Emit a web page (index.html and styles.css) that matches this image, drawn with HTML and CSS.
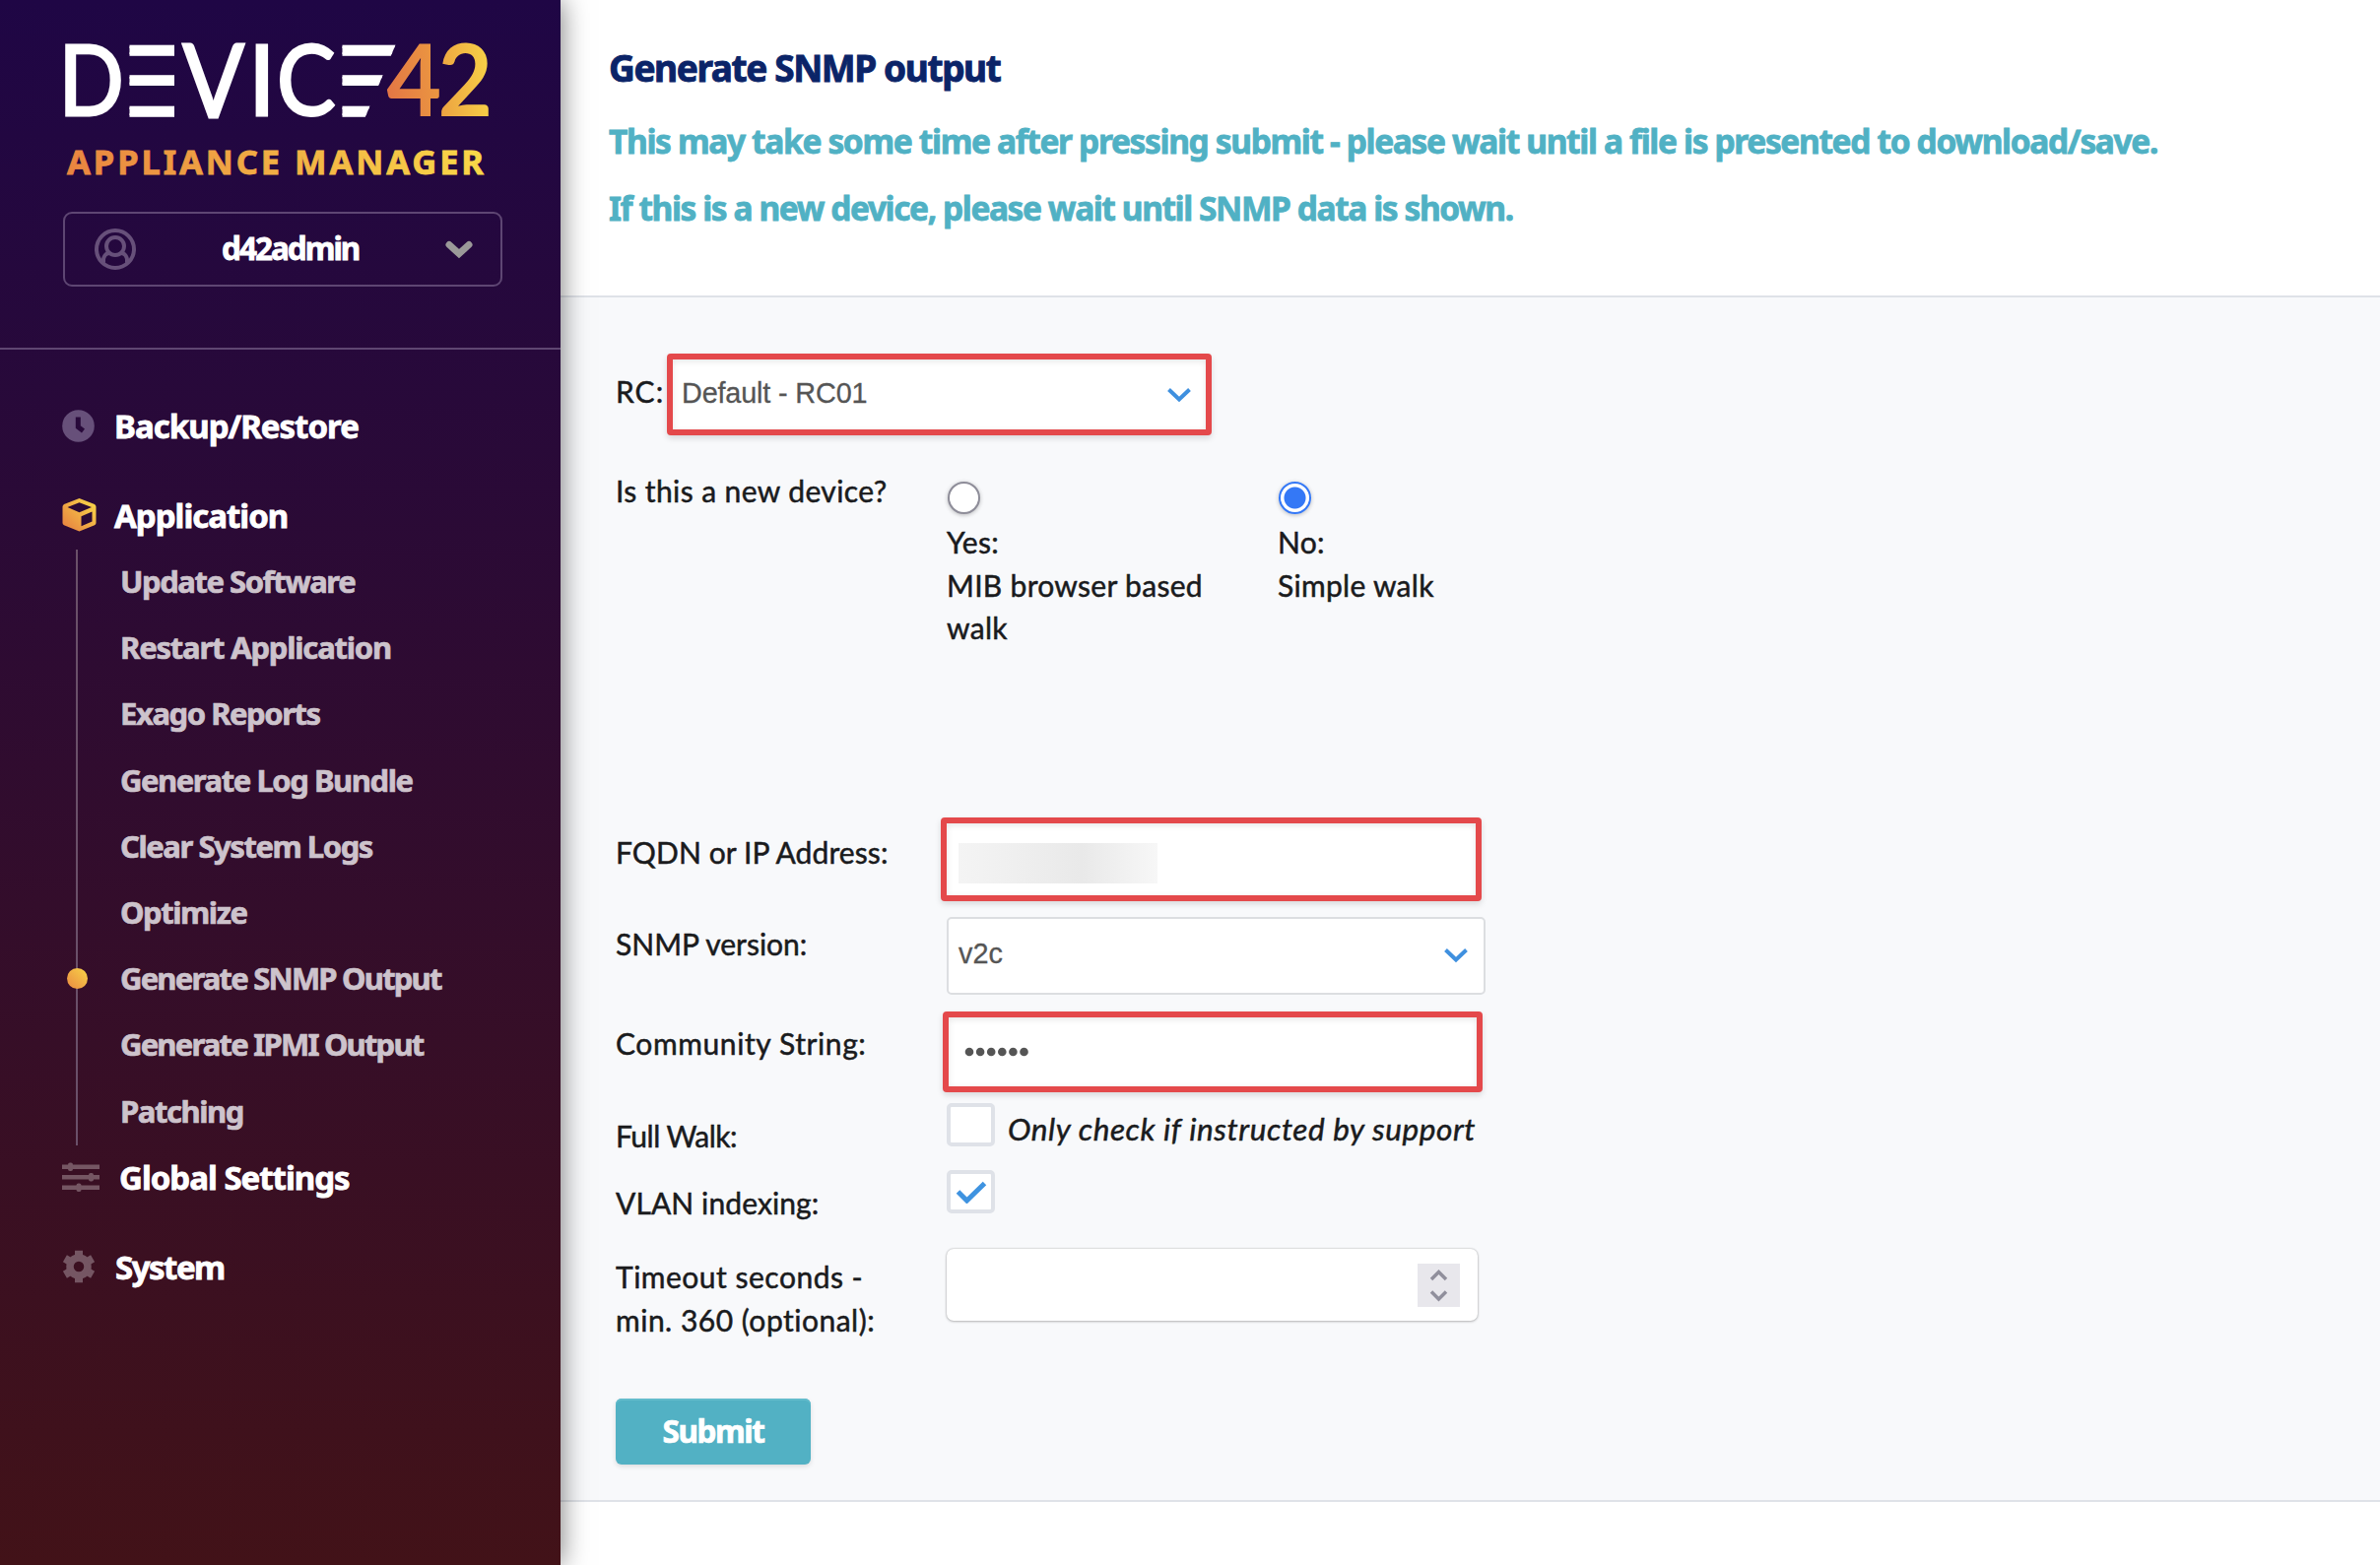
FILE: index.html
```html
<!DOCTYPE html>
<html lang="en">
<head>
<meta charset="utf-8">
<title>Generate SNMP output</title>
<link rel="stylesheet" href="styles.css">
</head>
<body>
<div class="app">
  <aside class="sidebar">
    <svg class="brand" width="569" height="195" viewBox="0 0 569 195">
      <defs>
        <linearGradient id="four" x1="0" y1=".7" x2="1" y2=".4"><stop offset="0" stop-color="#e27545"/><stop offset="1" stop-color="#ec9a40"/></linearGradient>
        <linearGradient id="two" x1="0" y1=".7" x2="1" y2=".5"><stop offset="0" stop-color="#eca041"/><stop offset="1" stop-color="#f8d347"/></linearGradient>
        <linearGradient id="warm2" gradientUnits="userSpaceOnUse" x1="68" y1="0" x2="491" y2="0"><stop offset="0" stop-color="#e98540"/><stop offset="1" stop-color="#f9d848"/></linearGradient>
        <clipPath id="e1"><rect x="131.5" y="40" width="45.5" height="85"/></clipPath>
        <clipPath id="e2"><path d="M347.5 40H403.8L368 125.4H347.5Z"/></clipPath>
      </defs>
      <g class="wordmark">
        <text transform="translate(59.5 117.3) scale(.88 1)">D</text>
        <g clip-path="url(#e1)"><text class="bars" transform="translate(91 116.5) scale(1.84 .985)">E</text></g>
        <text transform="translate(185.500 119) scale(.93 1.03)">V</text>
        <text transform="translate(252 117.3)">I</text>
        <text transform="translate(281 117.3) scale(.9 1)">C</text>
        <g clip-path="url(#e2)"><text class="bars" transform="translate(307 116.5) scale(1.84 .985)">E</text></g>
        <g class="number"><text fill="url(#four)" transform="translate(392.500 118) scale(.97 1.03)">4</text><text fill="url(#two)" transform="translate(444.500 117.7) scale(.97 1.02)">2</text></g>
      </g>
      <text class="tagline" x="68" y="177" textLength="423" fill="url(#warm2)" stroke="url(#warm2)">APPLIANCE MANAGER</text>
    </svg>
    <div class="user">
      <svg width="42" height="42" viewBox="0 0 42 42" fill="none" stroke="#67507a" stroke-width="4"><circle cx="21" cy="21" r="19"/><circle cx="21" cy="18" r="9"/><path d="M9 35C8 28 12 25 15 25M33 35C34 28 30 25 27 25"/></svg>
      <span class="user-name">d42admin</span>
      <svg width="28" height="19" viewBox="0 0 28 19" fill="none" stroke="#9b9999" stroke-width="7" stroke-linecap="round"><path d="M4 4.500L14 13.500L24 4.500"/></svg>
    </div>
    <nav class="nav">
      <a class="item"><svg width="33" height="33" viewBox="0 0 33 33"><circle cx="16.500" cy="16.500" r="16.300" fill="#67507a"/><path d="M16.300 7.500V17.500L21.500 21.500" fill="none" stroke="#28093a" stroke-width="5"/></svg><span>Backup/Restore</span></a>
      <a class="item"><svg width="35" height="34" viewBox="0 0 35 34"><defs><linearGradient id="box" x1="0" y1="1" x2="1" y2="0"><stop offset="0" stop-color="#e67c40"/><stop offset="1" stop-color="#fadc49"/></linearGradient></defs><path fill="url(#box)" fill-rule="evenodd" d="M17.500 0L33 6Q34.500 7 34.500 8.500V25Q34.500 26.500 33 27.300L17.500 33.500L2 27.300Q.5 26.500 .5 25V8.500Q.5 7 2 6ZM17.500 4.300L5.500 9L17.500 14.200L30 9ZM19.500 18.300V28.300L30.500 23.500V13.500Z"/></svg><span>Application</span></a>
      <div class="submenu">
        <a>Update Software</a>
        <a class="loose">Restart Application</a>
        <a>Exago Reports</a>
        <a>Generate Log Bundle</a>
        <a>Clear System Logs</a>
        <a>Optimize</a>
        <a class="current tight">Generate SNMP Output</a>
        <a class="tight">Generate IPMI Output</a>
        <a>Patching</a>
      </div>
      <a class="item wide"><svg width="38" height="30" viewBox="0 0 38 30" fill="#755663"><path d="M0 2.500H38V7H0ZM0 13H38V17.500H0ZM0 23.500H38V28H0Z"/><rect x="6" y="0.500" width="5" height="8.500" rx="2"/><rect x="27" y="11" width="5" height="8.500" rx="2"/><rect x="14.500" y="21.500" width="5" height="8.500" rx="2"/></svg><span>Global Settings</span></a>
      <a class="item system"><svg width="34" height="34" viewBox="-17 -17 34 34" fill="none" stroke="#755663"><circle r="9" stroke-width="7.500"/><path d="M0 -11V-16.300M0 11V16.300M9.500 -5.500L14.100 -8.200M9.500 5.500L14.100 8.200M-9.500 -5.500L-14.100 -8.200M-9.500 5.500L-14.100 8.200" stroke-width="8"/></svg><span>System</span></a>
    </nav>
  </aside>
  <main class="main">
    <header class="head">
      <h1>Generate SNMP output</h1>
      <p class="l1">This may take some time after pressing submit - please wait until a file is presented to download/save.</p>
      <p class="l2">If this is a new device, please wait until SNMP data is shown.</p>
    </header>
    <form class="form">
      <div class="rc">
        <label>RC:</label>
        <div class="control marked"><span>Default - RC01</span><svg class="chev" width="26" height="16" viewBox="0 0 26 16"><path d="M2.500 2.500L13 12.500L23.500 2.500"/></svg></div>
      </div>
      <label class="t-device">Is this a new device?</label>
      <div class="radios">
        <div><i class="radio"></i><p>Yes:<br>MIB browser based<br>walk</p></div>
        <div><i class="radio on"></i><p>No:<br>Simple walk</p></div>
      </div>
      <label class="t-fqdn">FQDN or IP Address:</label>
      <div class="control marked fqdn"><span class="redacted"></span></div>
      <label class="t-snmp">SNMP version:</label>
      <div class="control version"><span>v2c</span><svg class="chev" width="26" height="16" viewBox="0 0 26 16"><path d="M2.500 2.500L13 12.500L23.500 2.500"/></svg></div>
      <label class="t-comm">Community String:</label>
      <div class="control marked community"><svg width="66" height="10" viewBox="0 0 66 10" fill="#555"><circle cx="5" cy="5" r="4.300"/><circle cx="16.100" cy="5" r="4.300"/><circle cx="27.200" cy="5" r="4.300"/><circle cx="38.300" cy="5" r="4.300"/><circle cx="49.400" cy="5" r="4.300"/><circle cx="60.500" cy="5" r="4.300"/></svg></div>
      <label class="t-check full">Full Walk:</label>
      <div class="check-row"><i class="check"></i><em>Only check if instructed by support</em></div>
      <label class="t-check">VLAN indexing:</label>
      <div class="check-row"><i class="check"><svg width="32" height="24" viewBox="0 0 32 24"><path d="M2.500 12L11.500 21L29.500 3.500" fill="none" stroke="#3f93e0" stroke-width="5"/></svg></i></div>
      <label class="t-time">Timeout seconds -<br>min. 360 (optional):</label>
      <div class="timeout"><svg width="43" height="44" viewBox="0 0 43 44"><path fill="#e8e7ec" d="M0 0H43V44H0Z"/><path d="M14 16L21.500 8.500L29 16M14 28.500L21.500 36L29 28.500" fill="none" stroke="#908f9c" stroke-width="3.500"/></svg></div>
      <button class="submit" type="button">Submit</button>
    </form>
  </main>
</div>
</body>
</html>
```
FILE: styles.css
```css
* { box-sizing: border-box; }
body { margin: 0; background: #fff; }
h1, p { margin: 0; }
svg { display: block; flex: none; }
.app { display: flex; width: 2416px; height: 1589px; overflow: hidden; font-family: "Noto Sans", sans-serif; }

.sidebar { width: 569px; flex: none; z-index: 1; background: linear-gradient(#1f0645, #421218); box-shadow: 0 0 26px rgba(0, 0, 0, .55); }
.wordmark { font: 400 99px Lato, sans-serif; fill: #fff; stroke: #fff; stroke-width: 2.8px; }
.bars { stroke-width: 3.4px; }
.number { stroke: none; font-weight: 700; }
.tagline { font: 700 34.5px "Noto Sans", sans-serif; stroke-width: .8px; }
.user { display: flex; align-items: center; width: 446px; height: 76px; margin: 20px 0 0 64px; padding: 0 28px 0 30px; border: 2px solid #5e4673; border-radius: 9px; }
.user-name { flex: 1; padding-left: 87px; padding-bottom: 2px; color: #fff; font-size: 31.5px; font-weight: 700; letter-spacing: -2px; line-height: 60px; -webkit-text-stroke: .8px #fff; }
.nav { margin-top: 62px; padding-top: 43px; border-top: 2px solid #5f4672; }
.item { display: flex; align-items: center; height: 68px; margin-bottom: 23px; padding-left: 63px; color: #fff; font-size: 33px; font-weight: 700; line-height: 68px; letter-spacing: -1px; -webkit-text-stroke: .8px #fff; }
.item span { padding-top: 2px; }
.item svg { margin-right: 18px; }
.item:nth-child(1) svg, .item:nth-child(5) svg { margin-right: 20px; }
.item:nth-child(2) { margin-bottom: 0; }
.item.wide svg { margin-right: 20px; }
.item.system { letter-spacing: -1.5px; }
.submenu { position: relative; height: 604px; padding-left: 122px; }
.submenu::before { content: ""; position: absolute; left: 77px; top: 1px; width: 2px; height: 605px; background: #6a5069; }
.submenu a { display: block; position: relative; height: 67.2px; line-height: 67.2px; color: #cdc3cc; font-size: 31px; font-weight: 700; letter-spacing: -1.45px; -webkit-text-stroke: .7px #cdc3cc; }
.submenu a.tight { letter-spacing: -1.8px; }
.submenu a.loose { letter-spacing: -1.2px; }
.current::before { content: ""; position: absolute; left: -54px; top: 23px; width: 21px; height: 21px; border-radius: 50%; background: linear-gradient(45deg, #e98a42, #f8d448); }

.main { flex: 1; }
.head { height: 302px; padding: 44px 0 0 49px; border-bottom: 2px solid #dfe2e8; font-weight: 700; white-space: nowrap; }
h1 { color: #0b2468; font-size: 37px; line-height: 50px; letter-spacing: -1.4px; -webkit-text-stroke: .9px #0b2468; }
.head p { color: #50b1c4; font-size: 33.5px; line-height: 68px; letter-spacing: -1.35px; -webkit-text-stroke: .8px #50b1c4; }
.head .l1 { margin-top: 15px; }
.head .l2 { letter-spacing: -1.42px; }

.form { display: grid; grid-template-columns: 336px 1fr; grid-template-rows: 117px 354px 101px 96px 93px 68px 80px 152px 67px; align-items: start; justify-items: start; height: 1223px; padding: 57px 0 0 56px; background: #f8f9fb; border-bottom: 2px solid #dfe2e8; color: #1a1b1d; font: 400 30px/43.5px Lato, sans-serif; }
label, .radios p, .check-row em { -webkit-text-stroke: .5px #1a1b1d; }
.rc { grid-column: 1 / 3; display: flex; }
.rc label { width: 52px; padding-top: 17px; letter-spacing: 1px; }
.rc .control { width: 553px; height: 83px; }
.control { display: flex; align-items: center; justify-content: space-between; background: #fff; color: #555; font-family: "Liberation Sans", sans-serif; font-size: 28.8px; }
.control span { line-height: 40px; }
.rc .control span { padding-left: 9px; margin-top: -3px; letter-spacing: -.15px; -webkit-text-stroke: .3px #555; }
.rc .chev { margin-right: 14px; }
.marked { border: 6px solid #e4494b; border-radius: 4px; box-shadow: 0 3px 6px rgba(0, 0, 0, .13), inset 0 2px 6px rgba(0, 0, 0, .1); }
.chev path { fill: none; stroke: #3f90df; stroke-width: 4px; }
.t-device { padding-top: 1px; letter-spacing: .4px; }
.t-fqdn { padding-top: 14px; letter-spacing: .1px; }
.t-snmp { padding-top: 6px; }
.t-comm { padding-top: 11px; letter-spacing: .6px; }
.t-check { padding-top: 12px; letter-spacing: .1px; }
.t-check.full { letter-spacing: -.5px; }
.t-time { padding-top: 7px; letter-spacing: .5px; }
.radios { display: grid; grid-template-columns: 336px 336px; padding: 13px 0 0 1px; }
.radio { display: block; width: 33px; height: 33px; border: 2px solid #8e8d99; border-radius: 50%; background: #fff; box-shadow: 0 1px 4px rgba(0, 0, 0, .25); }
.radio.on { border-color: #3478f6; background: radial-gradient(circle, #3478f6 10.5px, #fff 11.5px); }
.radios p { margin: 7px 0 0 -1px; letter-spacing: .3px; }
.fqdn { width: 549px; height: 85px; margin-left: -6px; padding-left: 12px; }
.redacted { width: 202px; height: 41px; margin-top: 8px; background: linear-gradient(90deg, #f4f4f4, #e9e9e9 62%, #f7f7f7); }
.version { width: 547px; height: 79px; border: 2px solid #dcdee1; border-radius: 5px; padding: 0 15px 0 10px; }
.version span { margin-top: -5px; -webkit-text-stroke: .3px #555; }
.version .chev { margin-top: -1px; }
.community { width: 548px; height: 82px; margin-left: -4px; padding-left: 16px; }
.check-row { display: flex; }
.check { display: flex; align-items: center; justify-content: center; width: 49px; height: 44px; border: 4px solid #dfe2e8; border-radius: 5px; background: #fff; }
.check-row em { margin: 5px 0 0 13px; font-size: 31.5px; letter-spacing: .6px; }
.timeout { display: flex; align-items: center; justify-content: flex-end; width: 539px; height: 73px; padding-right: 18px; background: #fff; border-radius: 7px; box-shadow: 0 0 2px rgba(0, 0, 0, .3), 0 1px 3px rgba(0, 0, 0, .2); }
.submit { width: 198px; height: 67px; padding: 0 0 3px; border: 0; border-radius: 6px; background: #52b1c4; box-shadow: inset 0 2px #63bccc, 0 2px 5px rgba(0, 0, 0, .12); color: #fff; font: 700 31.5px "Noto Sans", sans-serif; letter-spacing: -1.4px; -webkit-text-stroke: .7px #fff; }
```
